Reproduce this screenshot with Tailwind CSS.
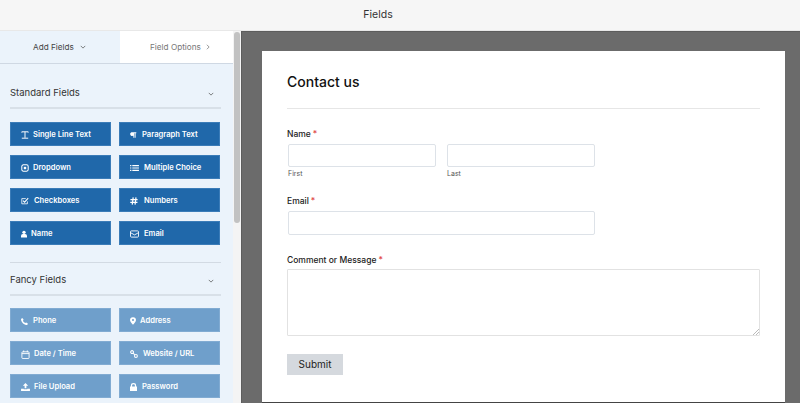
<!DOCTYPE html>
<html lang="en">

<head>
  <meta charset="UTF-8">
  <meta name="viewport" content="width=device-width, initial-scale=1.0">
  <title>Fields</title>
  <script src="https://cdn.jsdelivr.net/npm/@tailwindcss/browser@4"></script>
</head>

<body class="w-[800px] h-[403px] overflow-hidden bg-white font-['Inter',sans-serif] text-[#23282d]">
  <header class="h-[30px] bg-[#f6f6f6] flex items-center justify-center pr-[44px] text-[10.5px] text-[#333]">Fields</header>

  <div class="h-[373px] flex border-t border-[#e8e8e8]">
    <!-- left panel -->
    <aside class="w-[233px] shrink-0 bg-[#ebf3fb] overflow-hidden">
      <div class="h-[33px] flex border-b border-[#cfd8e3] text-[8.2px]">
        <div class="w-[120px] flex items-center gap-[6px] pl-[33px] text-[#444]">
          Add Fields
          <svg class="w-[6px] h-[6px]" viewBox="0 0 8 8" fill="none" stroke="#555" stroke-width="1"><path d="M1 2.5 4 5.5 7 2.5" /></svg>
        </div>
        <div class="flex-1 bg-white flex items-center gap-[4px] pl-[30px] text-[#777]">
          Field Options
          <svg class="w-[6px] h-[6px]" viewBox="0 0 8 8" fill="none" stroke="#777" stroke-width="1"><path d="M2.5 1 5.5 4 2.5 7" /></svg>
        </div>
      </div>

      <div class="px-[10px]">
        <div class="h-[45px] mr-[2px] pt-[16px] flex items-center justify-between border-b-2 border-[#d8e0e8] text-[9.5px] text-[#333]">
          Standard Fields
          <svg class="w-[6px] h-[6px] mr-[7px]" viewBox="0 0 8 8" fill="none" stroke="#555" stroke-width="1"><path d="M1 2.5 4 5.5 7 2.5" /></svg>
        </div>

        <div class="grid grid-cols-[101px_101px] gap-x-[8px] gap-y-[9px] pt-[13px] text-[7.6px] font-semibold text-white">
          <div class="h-[24px] flex items-center gap-[4px] pl-[10px] pt-[2px] bg-[#2068aa] border border-[#3b7cb8]">
            <svg class="w-[8px] h-[8px]" viewBox="0 0 10 10" fill="none" stroke="#fff" stroke-width="1.2"><path d="M1 2V1H9V2M5 1V8.5M1 9H9" /></svg>
            Single Line Text
          </div>
          <div class="h-[24px] flex items-center gap-[5px] pl-[10px] pt-[2px] bg-[#2068aa] border border-[#3b7cb8]">
            <svg class="w-[7px] h-[8px]" viewBox="0 0 10 10" fill="#fff"><path d="M2 1H9V2.5H8V9H6.7V2.5H6V9H4.8V6H4A2.5 2.5 0 0 1 2 1Z" /></svg>
            Paragraph Text
          </div>
          <div class="h-[24px] flex items-center gap-[4px] pl-[10px] pt-[2px] bg-[#2068aa] border border-[#3b7cb8]">
            <svg class="w-[8px] h-[8px]" viewBox="0 0 10 10" fill="none" stroke="#fff" stroke-width="1.3"><rect x="1" y="1" width="8" height="8" rx="2" /><rect x="3.5" y="3.5" width="3" height="3" fill="#fff" stroke="none" /></svg>
            Dropdown
          </div>
          <div class="h-[24px] flex items-center gap-[5px] pl-[10px] pt-[2px] bg-[#2068aa] border border-[#3b7cb8]">
            <svg class="w-[9px] h-[8px]" viewBox="0 0 10 9" fill="#fff"><path d="M0 1H1.5V2.5H0ZM2.5 1H10V2.5H2.5ZM0 3.8H1.5V5.2H0ZM2.5 3.8H10V5.2H2.5ZM0 6.5H1.5V8H0ZM2.5 6.5H10V8H2.5Z" /></svg>
            Multiple Choice
          </div>
          <div class="h-[24px] flex items-center gap-[5px] pl-[10px] pt-[2px] bg-[#2068aa] border border-[#3b7cb8]">
            <svg class="w-[8px] h-[8px]" viewBox="0 0 10 10" fill="none" stroke="#fff" stroke-width="1"><path d="M8 5.5V8.5H1V2H6" /><path d="M2.5 4.5 4.5 6.5 9 1.5" stroke-width="1.3" /></svg>
            Checkboxes
          </div>
          <div class="h-[24px] flex items-center gap-[6px] pl-[10px] pt-[2px] bg-[#2068aa] border border-[#3b7cb8]">
            <svg class="w-[8px] h-[8px]" viewBox="0 0 10 10" fill="none" stroke="#fff" stroke-width="1.5"><path d="M4 .5 2.8 9.5M7.5 .5 6.3 9.5M.5 3.3H9.5M.3 6.7H9.3" /></svg>
            Numbers
          </div>
          <div class="h-[24px] flex items-center gap-[4px] pl-[10px] pt-[2px] bg-[#2068aa] border border-[#3b7cb8]">
            <svg class="w-[6px] h-[8px]" viewBox="0 0 8 9" fill="#fff"><circle cx="4" cy="2.2" r="2.2" /><path d="M0 9V7A2.5 2.5 0 0 1 2.5 4.5H5.5A2.5 2.5 0 0 1 8 7V9Z" /></svg>
            Name
          </div>
          <div class="h-[24px] flex items-center gap-[5px] pl-[10px] pt-[2px] bg-[#2068aa] border border-[#3b7cb8]">
            <svg class="w-[9px] h-[8px]" viewBox="0 0 10 9" fill="none" stroke="#fff" stroke-width="1"><rect x=".5" y="1" width="9" height="7" rx="1" /><path d="M.5 3 5 5.5 9.5 3" /></svg>
            Email
          </div>
        </div>

        <div class="mt-[17px] mr-[2px] h-[34px] flex items-center justify-between pt-[4px] border-t border-b-2 border-t-[#d2dae3] border-b-[#d8e0e8] text-[9.5px] text-[#333]">
          Fancy Fields
          <svg class="w-[6px] h-[6px] mr-[7px]" viewBox="0 0 8 8" fill="none" stroke="#555" stroke-width="1"><path d="M1 2.5 4 5.5 7 2.5" /></svg>
        </div>

        <div class="grid grid-cols-[101px_101px] gap-x-[8px] gap-y-[9px] pt-[12px] text-[7.6px] font-semibold text-white">
          <div class="h-[24px] flex items-center gap-[5px] pl-[10px] pt-[2px] bg-[#6f9fcb] border border-[#81abd2]">
            <svg class="w-[7px] h-[7px]" viewBox="0 0 8 8" fill="#fff"><path d="M1.5 0 3 2 2.2 3.2C2.7 4.3 3.7 5.3 4.8 5.8L6 5 8 6.5 7 8C3.5 8 0 4.5 0 1Z" /></svg>
            Phone
          </div>
          <div class="h-[24px] flex items-center gap-[4px] pl-[10px] pt-[2px] bg-[#6f9fcb] border border-[#81abd2]">
            <svg class="w-[6px] h-[8px]" viewBox="0 0 7 9" fill="#fff"><path fill-rule="evenodd" d="M3.5 0A3.4 3.4 0 0 1 7 3.4C7 5.4 4.8 7.6 3.5 9 2.2 7.6 0 5.4 0 3.4A3.4 3.4 0 0 1 3.5 0ZM3.5 2.2A1.2 1.2 0 1 0 3.5 4.6 1.2 1.2 0 0 0 3.5 2.2Z" /></svg>
            Address
          </div>
          <div class="h-[24px] flex items-center gap-[4px] pl-[10px] pt-[2px] bg-[#6f9fcb] border border-[#81abd2]">
            <svg class="w-[9px] h-[9px]" viewBox="0 0 10 10" fill="none" stroke="#fff" stroke-width="1"><rect x="1" y="2" width="8" height="7.5" rx="1" /><path d="M1 4H9M3 .5V2.5M7 .5V2.5" /></svg>
            Date / Time
          </div>
          <div class="h-[24px] flex items-center gap-[5px] pl-[10px] pt-[2px] bg-[#6f9fcb] border border-[#81abd2]">
            <svg class="w-[8px] h-[8px]" viewBox="0 0 10 10" fill="none" stroke="#fff" stroke-width="1.3"><circle cx="2.6" cy="2.6" r="1.8" /><circle cx="7.4" cy="7.4" r="1.8" /><path d="M3.8 3.8 6.2 6.2" /></svg>
            Website / URL
          </div>
          <div class="h-[24px] flex items-center gap-[4px] pl-[10px] pt-[2px] bg-[#6f9fcb] border border-[#81abd2]">
            <svg class="w-[9px] h-[8px]" viewBox="0 0 10 9" fill="#fff"><path d="M5 0 8 3H6V6H4V3H2ZM0 6.5H3V7H7V6.5H10V9H0Z" /></svg>
            File Upload
          </div>
          <div class="h-[24px] flex items-center gap-[5px] pl-[10px] pt-[2px] bg-[#6f9fcb] border border-[#81abd2]">
            <svg class="w-[7px] h-[8px]" viewBox="0 0 8 9" fill="#fff"><path fill-rule="evenodd" d="M1 4V2.8A3 2.8 0 0 1 7 2.8V4H8V9H0V4ZM2.4 4H5.6V2.8A1.6 1.5 0 0 0 2.4 2.8Z" /></svg>
            Password
          </div>
        </div>
      </div>
    </aside>

    <!-- scrollbar -->
    <div class="w-[8px] shrink-0 bg-[#f4f4f4] pl-[1px] pr-[1px] pt-px">
      <div class="h-[191px] rounded-full bg-[#c2c2c2]"></div>
    </div>

    <!-- preview -->
    <main class="flex-1 bg-[#6b6b6b] border-l border-t border-[#5d5d5d] pl-[20px] pr-[15px] pt-[19px]">
      <div class="h-[352px] bg-white px-[25px] border-b border-[#444] text-[#222]">
        <h1 class="pt-[21px] text-[14px] leading-[20px] font-medium text-[#111]">Contact us</h1>
        <div class="mt-[16px] h-px bg-[#e6e6e6]"></div>

        <div class="mt-[19px] text-[8.5px] leading-[12px] font-[450]">Name<span class="text-[#e04848] ml-[2px]">*</span></div>
        <div class="mt-[4px] ml-px flex gap-[11px]">
          <div class="w-[148px]">
            <div class="h-[23px] bg-white border border-[#dde2e8] rounded-[2px]"></div>
            <div class="mt-[1px] text-[7px] leading-[11px] text-[#555]">First</div>
          </div>
          <div class="w-[148px]">
            <div class="h-[23px] bg-white border border-[#dde2e8] rounded-[2px]"></div>
            <div class="mt-[1px] text-[7px] leading-[11px] text-[#555]">Last</div>
          </div>
        </div>

        <div class="mt-[16px] text-[8.5px] leading-[12px] font-[450]">Email<span class="text-[#e04848] ml-[2px]">*</span></div>
        <div class="mt-[4px] ml-px w-[307px] h-[24px] bg-white border border-[#dde2e8] rounded-[2px]"></div>

        <div class="mt-[19px] text-[8.5px] leading-[12px] font-[450]">Comment or Message<span class="text-[#e04848] ml-[2px]">*</span></div>
        <div class="relative mt-[3px] h-[67px] bg-white border border-[#e2e2e2] rounded-[1px]">
          <svg class="absolute right-0 bottom-0 w-[6px] h-[6px]" viewBox="0 0 6 6" fill="none" stroke="#aaa" stroke-width=".8"><path d="M0 6 6 0M3 6 6 3" /></svg>
        </div>

        <div class="mt-[18px] w-[56px] h-[21px] flex items-center justify-center bg-[#d5d9de] text-[10px] text-[#222]">Submit</div>
      </div>
    </main>
  </div>
</body>

</html>
